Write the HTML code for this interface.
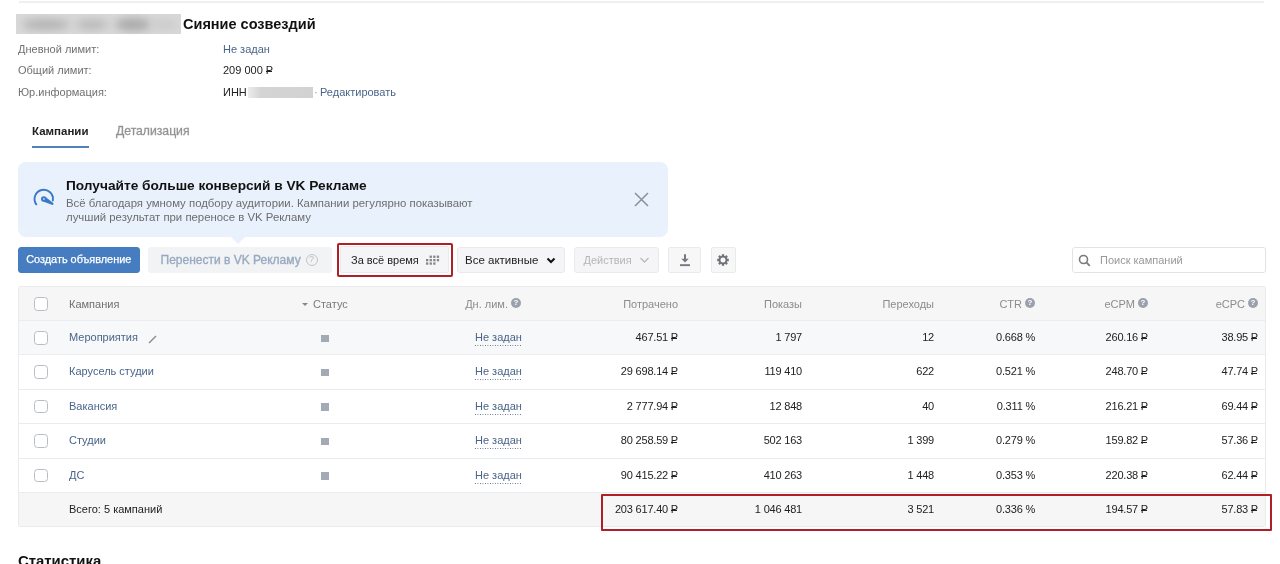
<!DOCTYPE html>
<html><head><meta charset="utf-8">
<style>
*{box-sizing:border-box;margin:0;padding:0}
html,body{width:1280px;height:564px;overflow:hidden;background:#fff}
body{font-family:"Liberation Sans",sans-serif;color:#222;position:relative}
#wrap{position:absolute;left:0;top:0;width:1280px;height:564px;will-change:transform}
.a{position:absolute;white-space:nowrap}
.lbl{font-size:11px;color:#707070}
.lnk{color:#4a6589}
.topline{position:absolute;left:19px;top:0;width:1245px;height:3px;border-bottom:2px solid #efefef}
.blur{position:absolute;background:#d4d4d4;filter:blur(1.5px)}
.btn{position:absolute;top:247px;height:25.5px;border-radius:3px;background:#f5f5f7;border:1px solid #e9eaed;font-size:11px;line-height:24.5px}
.tbl{position:absolute;left:18px;top:286px;width:1248px;height:241px;border:1px solid #ebebee;border-radius:2px;overflow:hidden}
.row{position:absolute;left:0;width:1246px;height:34.5px;border-top:1px solid #ebecef}
.cb{position:absolute;left:15px;top:10px;width:13.5px;height:13.5px;border:1.4px solid #b9bcc2;border-radius:3.5px;background:#fff}
.c{position:absolute;font-size:11px;top:10px;line-height:13px;white-space:nowrap}
.r{text-align:right;letter-spacing:-0.2px}
.hdrow .c{top:10.5px;letter-spacing:0}
.rub{font-style:normal;position:relative;display:inline-block}
.rub::after{content:"";position:absolute;left:0;top:0.67em;width:0.58em;height:1px;background:currentColor}
.hd{color:#8c8c8c}
.q{display:inline-block;width:10px;height:10px;border-radius:50%;background:#9aa1ab;color:#fff;font-size:8px;line-height:10px;text-align:center;font-weight:bold;vertical-align:2.5px;margin-left:3px}
.st{position:absolute;left:302px;top:13.5px;width:7.5px;height:7.5px;background:#a3aab5}
.nz{position:absolute;left:456px;top:10px;font-size:11px;color:#4a6589;line-height:13px;padding-bottom:2px;background:linear-gradient(90deg,#5a6f88 50%,transparent 50%) repeat-x 0 100%/2.5px 1px}
</style></head><body><div id="wrap">
<div class="topline"></div>

<div class="a" style="left:15.5px;top:14px;width:165px;height:20px;background:#d9d9d9;overflow:hidden">
 <div class="a" style="left:6px;top:5px;width:48px;height:11px;border-radius:50%;background:#b3b3b3;filter:blur(4px)"></div>
 <div class="a" style="left:60px;top:5px;width:32px;height:11px;border-radius:50%;background:#bababa;filter:blur(4px)"></div>
 <div class="a" style="left:99px;top:4px;width:36px;height:13px;border-radius:50%;background:#aaaaaa;filter:blur(4px)"></div>
 <div class="a" style="left:136px;top:5px;width:26px;height:11px;border-radius:50%;background:#cbcbcb;filter:blur(4px)"></div>
</div>
<div class="a" style="left:183px;top:16px;font-size:14.5px;font-weight:bold;color:#111">Сияние созвездий</div>

<div class="a lbl" style="left:18px;top:43px">Дневной лимит:</div>
<div class="a lnk" style="left:223px;top:43px;font-size:11px">Не задан</div>
<div class="a lbl" style="left:18px;top:64px">Общий лимит:</div>
<div class="a" style="left:223px;top:64px;font-size:11px;color:#222">209 000 <i class="rub">Р</i></div>
<div class="a lbl" style="left:18px;top:86px">Юр.информация:</div>
<div class="a" style="left:223px;top:86px;font-size:11px;color:#222">ИНН</div>
<div class="a" style="left:248px;top:86.5px;width:65px;height:11px;background:linear-gradient(90deg,#ececec 0%,#d4d4d4 20%,#d2d2d2 100%)"></div>
<div class="a" style="left:314px;top:86px;font-size:11px;color:#8a9bb0">·</div>
<div class="a lnk" style="left:320px;top:86px;font-size:11px">Редактировать</div>

<div class="a" style="left:32px;top:125px;font-size:11.5px;font-weight:bold;color:#222">Кампании</div>
<div class="a" style="left:116px;top:124px;font-size:12.2px;color:#939393;-webkit-text-stroke:0.3px #939393">Детализация</div>
<div class="a" style="left:32px;top:145.5px;width:57px;height:2px;background:#5181b8"></div>

<!-- banner -->
<div class="a" style="left:18px;top:162px;width:650px;height:75px;background:#e9f2fc;border-radius:8px"></div>
<svg class="a" style="left:231px;top:236.5px" width="14" height="8" viewBox="0 0 14 8"><path d="M0 0 L7 7 L14 0Z" fill="#e9f2fc"/></svg>
<svg class="a" style="left:30px;top:185px" width="30" height="27" viewBox="0 0 30 27">
 <path d="M6.31 19.36 A9.2 9.2 0 1 1 22.81 15.55" fill="none" stroke="#3b78c8" stroke-width="1.9" stroke-linecap="round"/>
 <path d="M15.02 11.54 L23.5 18.2 Q23.6 19.9 22.5 20.0 L12.38 16.26 Z" fill="#3b78c8"/>
 <circle cx="13.7" cy="13.9" r="2.7" fill="#3b78c8"/>
 <circle cx="13.9" cy="14" r="0.9" fill="#bcd3f0"/>
</svg>
<div class="a" style="left:66px;top:177.5px;font-size:13.7px;font-weight:bold;color:#111">Получайте больше конверсий в VK Рекламе</div>
<div class="a" style="left:66px;top:197px;font-size:11.38px;line-height:13.5px;color:#6d6d6d;white-space:normal;width:420px">Всё благодаря умному подбору аудитории. Кампании регулярно показывают<br>лучший результат при переносе в VK Рекламу</div>
<svg class="a" style="left:633.5px;top:191.5px" width="15" height="15" viewBox="0 0 15 15"><path d="M1 1L14 14M14 1L1 14" stroke="#8a9097" stroke-width="1.5"/></svg>

<!-- buttons -->
<div class="btn" style="left:18px;width:121.5px;background:#467cc0;border-color:#467cc0;color:#fff;text-align:center;-webkit-text-stroke:0.25px #fff;font-size:10.9px;line-height:22.5px">Создать объявление</div>
<div class="btn" style="left:148px;width:184px;background:#f2f3f5;border-color:#f2f3f5;color:#98aac0;font-size:12px;padding-left:11.5px;-webkit-text-stroke:0.35px #98aac0">Перенести в VK Рекламу <span style="position:absolute;left:156.5px;top:5.5px;width:12px;height:12px;border:1.3px solid #c4c4c4;border-radius:50%;font-size:9px;line-height:9.5px;text-align:center;color:#bbb;-webkit-text-stroke:0">?</span></div>
<div class="btn" style="left:340px;width:109px;top:246px;height:27px;color:#222;padding-left:10px;line-height:26px;border-radius:2px">За всё время</div>
<svg class="a" style="left:425.5px;top:255px" width="14" height="10" viewBox="0 0 14 10" fill="#858585">
 <rect x="3.6" y="0.6" width="2.3" height="2.3"/><rect x="7.2" y="0.6" width="2.3" height="2.3"/><rect x="10.8" y="0.6" width="2.3" height="2.3"/>
 <rect x="0" y="4" width="2.3" height="2.3"/><rect x="3.6" y="4" width="2.3" height="2.3"/><rect x="7.2" y="4" width="2.3" height="2.3"/><rect x="10.8" y="4" width="2.3" height="2.3"/>
 <rect x="0" y="7.4" width="2.3" height="2.3"/><rect x="3.6" y="7.4" width="2.3" height="2.3"/><rect x="7.2" y="7.4" width="2.3" height="2.3"/>
</svg>
<div class="a" style="left:337px;top:243px;width:116px;height:34px;border:2.7px solid #b01f26;border-radius:2px"></div>

<div class="btn" style="left:457px;width:107.5px;color:#222;padding-left:7px;font-size:11.5px">Все активные</div>
<svg class="a" style="left:546px;top:257px" width="10" height="7" viewBox="0 0 10 7"><path d="M1.5 1.5L5 5L8.5 1.5" fill="none" stroke="#111" stroke-width="2"/></svg>
<div class="btn" style="left:573.5px;width:85px;color:#b5b5b5;padding-left:9px">Действия</div>
<svg class="a" style="left:639px;top:256px" width="11" height="8" viewBox="0 0 11 8"><path d="M1.5 2L5.5 6L9.5 2" fill="none" stroke="#bbb" stroke-width="1.4"/></svg>
<div class="btn" style="left:667.5px;width:33.5px;border-radius:2px;background:#f7f7f8"></div>
<svg class="a" style="left:679px;top:253px" width="12" height="14" viewBox="0 0 12 14"><path d="M5 1.2H7V5.8H9.8L6 9.6L2.2 5.8H5Z" fill="#767a80"/><rect x="1" y="11.2" width="10" height="1.9" fill="#767a80"/></svg>
<div class="btn" style="left:710.5px;width:25px;border-radius:2px;background:#f7f7f8"></div>
<svg class="a" style="left:715.5px;top:252.7px" width="14" height="14" viewBox="0 0 14 14"><path fill="#6f7278" fill-rule="evenodd" d="M5.86 2.75 L5.87 1.21 L8.13 1.21 L8.14 2.75 L9.20 3.19 L10.30 2.11 L11.89 3.70 L10.81 4.80 L11.25 5.86 L12.79 5.87 L12.79 8.13 L11.25 8.14 L10.81 9.20 L11.89 10.30 L10.30 11.89 L9.20 10.81 L8.14 11.25 L8.13 12.79 L5.87 12.79 L5.86 11.25 L4.80 10.81 L3.70 11.89 L2.11 10.30 L3.19 9.20 L2.75 8.14 L1.21 8.13 L1.21 5.87 L2.75 5.86 L3.19 4.80 L2.11 3.70 L3.70 2.11 L4.80 3.19Z M7 4.5 A2.5 2.5 0 1 0 7 9.5 A2.5 2.5 0 1 0 7 4.5Z"/></svg>

<!-- search -->
<div class="a" style="left:1072px;top:247px;width:193.5px;height:25.5px;border:1px solid #e2e3e6;border-radius:3px;background:#fff"></div>
<svg class="a" style="left:1078px;top:254px" width="13" height="13" viewBox="0 0 13 13"><circle cx="5.5" cy="5.5" r="4" fill="none" stroke="#7a7a7a" stroke-width="1.6"/><path d="M8.4 8.4L11.8 11.8" stroke="#7a7a7a" stroke-width="1.8"/></svg>
<div class="a" style="left:1100px;top:254px;font-size:11px;color:#999">Поиск кампаний</div>

<!-- table -->
<div class="tbl">
 <div class="row hdrow" style="top:0;border-top:none;background:#f6f6f7;height:33px">
  <div class="cb" style="top:10px"></div>
  <div class="c hd" style="left:50px;color:#707070">Кампания</div>
  <svg class="a" style="left:283px;top:16px" width="6" height="4" viewBox="0 0 6 4"><path d="M0 0H6L3 3Z" fill="#888"/></svg>
  <div class="c hd" style="left:294px;color:#7a7a7a">Статус</div>
  <div class="c hd r" style="right:744px">Дн. лим.<span class="q">?</span></div>
  <div class="c hd r" style="right:587px">Потрачено</div>
  <div class="c hd r" style="right:463px">Показы</div>
  <div class="c hd r" style="right:331px">Переходы</div>
  <div class="c hd r" style="right:230px">CTR<span class="q">?</span></div>
  <div class="c hd r" style="right:117px">eCPM<span class="q">?</span></div>
  <div class="c hd r" style="right:7px">eCPC<span class="q">?</span></div>
 </div>
 <div class="row" style="top:33px;background:#f7f8fa">
  <div class="cb"></div>
  <div class="c lnk" style="left:50px">Мероприятия</div>
  <svg class="a" style="left:129px;top:13.5px" width="9" height="9" viewBox="0 0 9 9"><path d="M1 8L8 1" stroke="#8c8c8c" stroke-width="1.5"/></svg>
  <div class="st"></div>
  <div class="nz">Не задан</div>
  <div class="c r" style="right:587px">467.51 <i class="rub">Р</i></div>
  <div class="c r" style="right:463px">1 797</div>
  <div class="c r" style="right:331px">12</div>
  <div class="c r" style="right:230px">0.668 %</div>
  <div class="c r" style="right:117px">260.16 <i class="rub">Р</i></div>
  <div class="c r" style="right:7px">38.95 <i class="rub">Р</i></div>
 </div>
 <div class="row" style="top:67.4px">
  <div class="cb"></div>
  <div class="c lnk" style="left:50px">Карусель студии</div>
  <div class="st"></div>
  <div class="nz">Не задан</div>
  <div class="c r" style="right:587px">29 698.14 <i class="rub">Р</i></div>
  <div class="c r" style="right:463px">119 410</div>
  <div class="c r" style="right:331px">622</div>
  <div class="c r" style="right:230px">0.521 %</div>
  <div class="c r" style="right:117px">248.70 <i class="rub">Р</i></div>
  <div class="c r" style="right:7px">47.74 <i class="rub">Р</i></div>
 </div>
 <div class="row" style="top:101.8px">
  <div class="cb"></div>
  <div class="c lnk" style="left:50px">Вакансия</div>
  <div class="st"></div>
  <div class="nz">Не задан</div>
  <div class="c r" style="right:587px">2 777.94 <i class="rub">Р</i></div>
  <div class="c r" style="right:463px">12 848</div>
  <div class="c r" style="right:331px">40</div>
  <div class="c r" style="right:230px">0.311 %</div>
  <div class="c r" style="right:117px">216.21 <i class="rub">Р</i></div>
  <div class="c r" style="right:7px">69.44 <i class="rub">Р</i></div>
 </div>
 <div class="row" style="top:136.2px">
  <div class="cb"></div>
  <div class="c lnk" style="left:50px">Студии</div>
  <div class="st"></div>
  <div class="nz">Не задан</div>
  <div class="c r" style="right:587px">80 258.59 <i class="rub">Р</i></div>
  <div class="c r" style="right:463px">502 163</div>
  <div class="c r" style="right:331px">1 399</div>
  <div class="c r" style="right:230px">0.279 %</div>
  <div class="c r" style="right:117px">159.82 <i class="rub">Р</i></div>
  <div class="c r" style="right:7px">57.36 <i class="rub">Р</i></div>
 </div>
 <div class="row" style="top:170.6px">
  <div class="cb"></div>
  <div class="c lnk" style="left:50px">ДС</div>
  <div class="st"></div>
  <div class="nz">Не задан</div>
  <div class="c r" style="right:587px">90 415.22 <i class="rub">Р</i></div>
  <div class="c r" style="right:463px">410 263</div>
  <div class="c r" style="right:331px">1 448</div>
  <div class="c r" style="right:230px">0.353 %</div>
  <div class="c r" style="right:117px">220.38 <i class="rub">Р</i></div>
  <div class="c r" style="right:7px">62.44 <i class="rub">Р</i></div>
 </div>
 <div class="row" style="top:205px;background:#f6f6f7;height:35px">
  <div class="c" style="left:50px">Всего: 5 кампаний</div>
  <div class="c r" style="right:587px">203 617.40 <i class="rub">Р</i></div>
  <div class="c r" style="right:463px">1 046 481</div>
  <div class="c r" style="right:331px">3 521</div>
  <div class="c r" style="right:230px">0.336 %</div>
  <div class="c r" style="right:117px">194.57 <i class="rub">Р</i></div>
  <div class="c r" style="right:7px">57.83 <i class="rub">Р</i></div>
 </div>
</div>
<div class="a" style="left:601px;top:494px;width:671px;height:36.5px;border:2.7px solid #b01f26;border-radius:1px"></div>

<div class="a" style="left:18px;top:552.5px;font-size:14.9px;font-weight:bold;color:#111">Статистика</div>
</div></body></html>
